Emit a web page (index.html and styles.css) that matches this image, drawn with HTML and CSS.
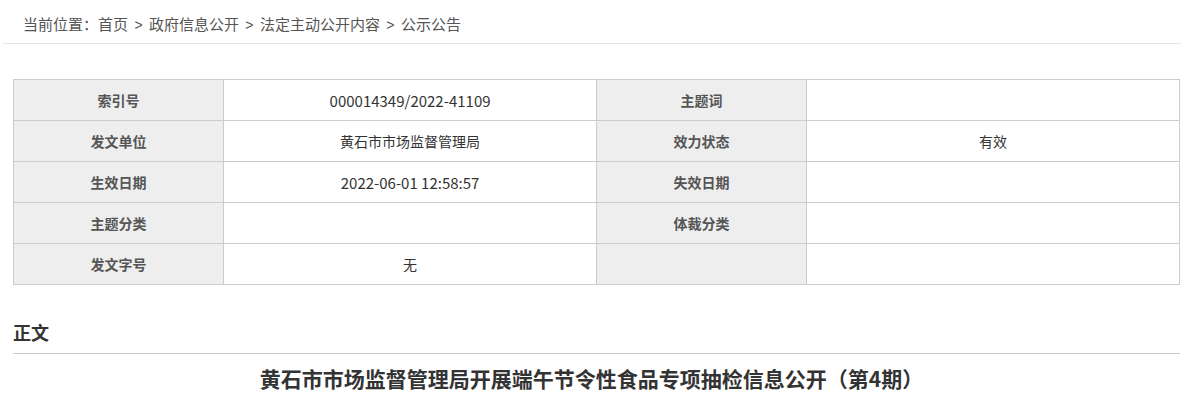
FILE: index.html
```html
<!DOCTYPE html>
<html>
  <head>
    <meta charset="utf-8" />
    <title>公示公告</title>
    <link rel="stylesheet" href="styles.css">
  </head>
  <body>
    <div class="crumbs">
      <span>当前位置：</span><a href="#">首页</a>
      <span class="sep">&gt;</span>
      <a href="#">政府信息公开</a>
      <span class="sep">&gt;</span>
      <a href="#">法定主动公开内容</a>
      <span class="sep">&gt;</span>
      <a href="#">公示公告</a>
    </div>

    <div class="main">
      <table class="meta">
        <tr>
          <th>索引号</th><td class="num">000014349/2022-41109</td>
          <th>主题词</th><td></td>
        </tr>
        <tr>
          <th>发文单位</th><td>黄石市市场监督管理局</td>
          <th>效力状态</th><td>有效</td>
        </tr>
        <tr>
          <th>生效日期</th><td class="num">2022-06-01 12:58:57</td>
          <th>失效日期</th><td></td>
        </tr>
        <tr>
          <th>主题分类</th><td></td>
          <th>体裁分类</th><td></td>
        </tr>
        <tr>
          <th>发文字号</th><td>无</td>
          <th></th><td></td>
        </tr>
      </table>

      <h2 class="section">正文</h2>
      <h1 class="title">黄石市市场监督管理局开展端午节令性食品专项抽检信息公开（第4期）</h1>
    </div>
  </body>
</html>
```

FILE: styles.css
```css
body {
  margin: 0;
  font-family: "Noto Sans CJK SC", "Liberation Sans", sans-serif;
  color: #333;
  background: #fff;
}

.crumbs {
  margin: 0 9px 0 3px;
  padding: 14px 0 0 20px;
  height: 29px;
  border-bottom: 1px solid #e5e5e5;
  font-size: 15px;
  line-height: 20px;
  color: #555;
}

.crumbs a {
  color: #555;
  text-decoration: none;
}

.crumbs .sep {
  margin: 0 3px;
  font-family: "Liberation Sans", sans-serif;
  font-size: 14px;
}

.main {
  margin: 35px 10px 0 13px;
}

.meta {
  width: 100%;
  border-collapse: collapse;
  table-layout: fixed;
  font-size: 14px;
}

.meta th,
.meta td {
  height: 40px;
  padding: 0;
  border: 1px solid #ccc;
  text-align: center;
  vertical-align: middle;
}

.meta th {
  width: 18%;
  background: #eee;
  color: #555;
  font-weight: bold;
}

.meta td {
  width: 32%;
  color: #333;
}

.meta td.num {
  font-size: 15px;
}

.section {
  margin: 34px 0 0;
  padding-bottom: 8px;
  border-bottom: 1px solid #ccc;
  font-size: 18px;
  line-height: 26px;
  color: #333;
}

.title {
  margin: 9px 0 0;
  padding-right: 10px;
  text-align: center;
  font-size: 21px;
  line-height: 30px;
  color: #333;
}
```
